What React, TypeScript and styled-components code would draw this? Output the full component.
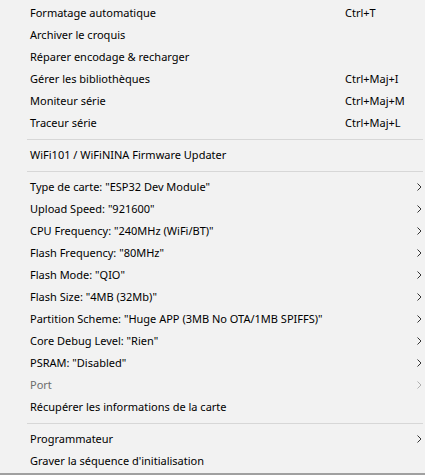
import React from "react";
import styled, { createGlobalStyle } from "styled-components";

const Global = createGlobalStyle`
  html, body { margin: 0; padding: 0; background: #f2f2f2; }
  body { font-family: "Noto Sans", Lato, sans-serif; }
`;

const Menu = styled.div`
  width: 425px;
  height: 475px;
  box-sizing: border-box;
  background: #f2f2f2;
  padding-top: 2px;
  border-bottom: 2px solid #a0a0a0;
  display: flex;
  flex-direction: column;
  overflow: hidden;
`;

const Item = styled.div<{ $disabled?: boolean }>`
  height: 22px;
  display: grid;
  grid-template-columns: 315px 72px 1fr;
  align-items: center;
  padding-left: 30px;
  font-size: 11px;
  color: ${(p) => (p.$disabled ? "#6d6d6d" : "#000")};
  white-space: nowrap;
`;

const Label = styled.span`
  line-height: 22px;
`;

const Shortcut = styled.span`
  line-height: 22px;
`;

const Arrow = styled.span`
  display: flex;
  align-items: center;
`;

const Separator = styled.div`
  height: 10px;
  display: flex;
  align-items: center;
  padding-left: 27px;
  &::after {
    content: "";
    flex: 1;
    height: 1px;
    background: #d7d7d7;
    margin-right: 2px;
  }
`;

type Entry =
  | { sep: true }
  | { label: string; shortcut?: string; sub?: boolean; disabled?: boolean; sep?: false };

const entries: Entry[] = [
  { label: "Formatage automatique", shortcut: "Ctrl+T" },
  { label: "Archiver le croquis" },
  { label: "Réparer encodage & recharger" },
  { label: "Gérer les bibliothèques", shortcut: "Ctrl+Maj+I" },
  { label: "Moniteur série", shortcut: "Ctrl+Maj+M" },
  { label: "Traceur série", shortcut: "Ctrl+Maj+L" },
  { sep: true },
  { label: "WiFi101 / WiFiNINA Firmware Updater" },
  { sep: true },
  { label: 'Type de carte: "ESP32 Dev Module"', sub: true },
  { label: 'Upload Speed: "921600"', sub: true },
  { label: 'CPU Frequency: "240MHz (WiFi/BT)"', sub: true },
  { label: 'Flash Frequency: "80MHz"', sub: true },
  { label: 'Flash Mode: "QIO"', sub: true },
  { label: 'Flash Size: "4MB (32Mb)"', sub: true },
  { label: 'Partition Scheme: "Huge APP (3MB No OTA/1MB SPIFFS)"', sub: true },
  { label: 'Core Debug Level: "Rien"', sub: true },
  { label: 'PSRAM: "Disabled"', sub: true },
  { label: "Port", sub: true, disabled: true },
  { label: "Récupérer les informations de la carte" },
  { sep: true },
  { label: "Programmateur", sub: true },
  { label: "Graver la séquence d'initialisation" },
];

const Chevron = ({ color }: { color: string }) => (
  <svg width="5" height="8" viewBox="0 0 5 8">
    <polyline points="0.5,0.5 4,4 0.5,7.5" fill="none" stroke={color} strokeWidth="1" />
  </svg>
);

export default function App() {
  return (
    <>
      <Global />
      <Menu>
        {entries.map((e, i) =>
          e.sep ? (
            <Separator key={i} />
          ) : (
            <Item key={i} $disabled={e.disabled}>
              <Label>{e.label}</Label>
              <Shortcut>{e.shortcut ?? ""}</Shortcut>
              <Arrow>{e.sub ? <Chevron color={e.disabled ? "#b0b0b0" : "#333"} /> : null}</Arrow>
            </Item>
          )
        )}
      </Menu>
    </>
  );
}
